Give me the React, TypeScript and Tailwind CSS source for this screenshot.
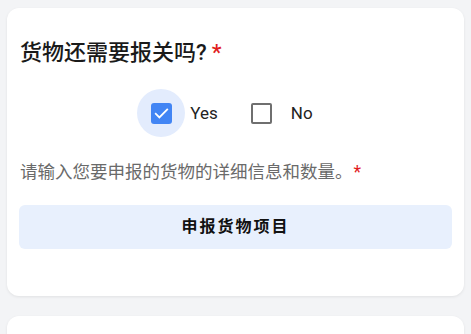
import React from "react";

export default function App() {
  return (
    <div
      className="h-[334px] w-full overflow-hidden bg-[#f3f4f6] px-[7px] pt-[8px]"
      style={{ fontFamily: 'Roboto, "Noto Sans CJK SC", sans-serif' }}
    >
      <div className="rounded-[12px] bg-white px-[12px] pb-[47px] pt-[30px] shadow-[0_1px_3px_rgba(0,0,0,0.08)]">
        <div className="flex items-center pl-[1px] text-[22px] font-medium leading-[30px] text-[#1a1a1a]">
          <span>货物还需要报关吗?</span>
          <span className="ml-[5px] text-[#e11d1d]">*</span>
        </div>
        <div className="mt-[21px] flex items-center justify-center pr-[21px]">
          <div className="flex items-center">
            <div className="flex h-[48px] w-[48px] items-center justify-center rounded-full bg-[#e3ecfd]">
              <div className="flex h-[21px] w-[21px] items-center justify-center rounded-[3px] bg-[#4285f4]">
                <svg width="17" height="17" viewBox="0 0 24 24" fill="none">
                  <path d="M4 12.5l5 5L20 6.5" stroke="white" strokeWidth="2.6" strokeLinecap="square" />
                </svg>
              </div>
            </div>
            <span className="ml-[5px] text-[17px] leading-[24px] text-[#222]">Yes</span>
          </div>
          <div className="ml-[33px] flex items-center">
            <div className="h-[21px] w-[21px] rounded-[2px] border-[2px] border-[#6f6f6f]" />
            <span className="ml-[19px] text-[17px] leading-[24px] text-[#222]">No</span>
          </div>
        </div>
        <div className="mt-[23px] flex items-center pl-[1px] text-[17.5px] leading-[24px] text-[#6a6a6a]">
          <span>请输入您要申报的货物的详细信息和数量。</span>
          <span className="ml-[1px] text-[#e11d1d]">*</span>
        </div>
        <button className="mt-[21px] flex h-[44px] w-full items-center justify-center rounded-[6px] bg-[#e8f0fd] text-[16px] font-bold tracking-[2px] text-[#111]">
          申报货物项目
        </button>
      </div>
      <div className="mt-[20px] h-[40px] rounded-t-[12px] bg-white shadow-[0_1px_3px_rgba(0,0,0,0.08)]" />
    </div>
  );
}
